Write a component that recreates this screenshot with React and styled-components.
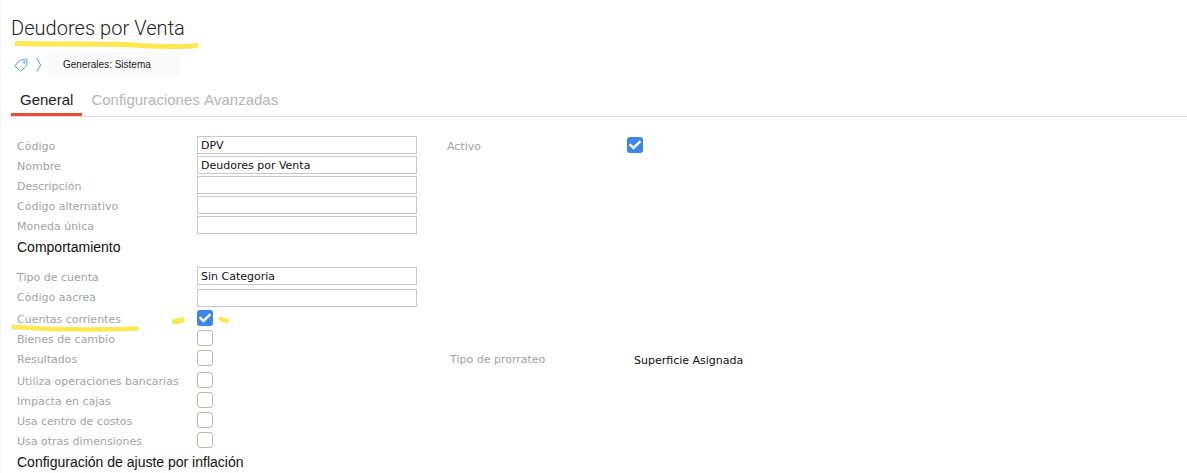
import React from "react";
import styled, { createGlobalStyle } from "styled-components";
import { FaCheck } from "react-icons/fa";

const Global = createGlobalStyle`
  html, body { margin: 0; padding: 0; background: #fff; }
  body { font-family: "DejaVu Sans", sans-serif; }
`;

const Page = styled.div`
  position: relative;
  width: 1187px;
  height: 473px;
  overflow: hidden;
  box-sizing: border-box;
  padding-top: 14px;
  background: #fff;
  box-shadow: inset 1px 0 0 #f4f4f4;
`;
const Title = styled.h1`
  margin: 0 0 0 11px;
  font: 300 20px/28px Roboto, sans-serif;
  letter-spacing: 0.05px;
  color: #222;
`;
const Crumbs = styled.div`
  display: flex;
  align-items: center;
  height: 25px;
  margin: 10px 0 0 14px;
`;
const Crumb = styled.div`
  width: 132px;
  height: 25px;
  margin-left: 6px;
  box-sizing: border-box;
  padding-left: 15px;
  border-radius: 4px;
  background: #fafafa;
  font: 400 10px/25px "Liberation Sans", Arial, sans-serif;
  color: #222;
`;
const Tabs = styled.div`
  display: flex;
  margin: 9px 0 0 11px;
  height: 30px;
  border-bottom: 1px solid #ddd;
`;
const Tab = styled.div`
  box-sizing: border-box;
  height: 30px;
  padding: 4px 9px 0;
  font: 400 15px/20px "Liberation Sans", Arial, sans-serif;
  font-kerning: none;
  color: ${p => (p.$active ? "#222" : "#b5b5b5")};
  border-bottom: 3px solid ${p => (p.$active ? "#e74c3c" : "transparent")};
`;
const Form = styled.div`
  padding: 18px 0 0 17px;
`;
const Row = styled.div`
  display: flex;
  align-items: center;
  height: ${p => p.$h || 20}px;
`;
const Label = styled.label`
  flex: none;
  width: ${p => p.$w || 180}px;
  padding-top: ${p => (p.$shift || 0) * 2}px;
  font-size: 11px;
  color: #a3a3a3;
  line-height: 20px;
`;
const Input = styled.div`
  flex: none;
  width: 220px;
  height: 18px;
  box-sizing: border-box;
  border: 1px solid #c8c8c8;
  padding: 1px 0 0 3px;
  font-size: 11px;
  line-height: 15px;
  color: #111;
`;
const Check = styled.span`
  flex: none;
  display: flex;
  align-items: center;
  justify-content: center;
  width: 16px;
  height: 16px;
  box-sizing: border-box;
  border-radius: 3px;
  border: ${p => (p.$on ? "none" : "1px solid #bdb7b2")};
  background: ${p => (p.$on ? "#3b86e8" : "#fff")};
  color: #fff;
  font-size: 12px;
`;
const Heading = styled.h3`
  margin: 0;
  font: 400 14px/20px "Liberation Sans", Arial, sans-serif;
  color: #111;
`;
const Right = styled.div`
  display: flex;
  align-items: center;
  margin-left: ${p => p.$ml}px;
`;
const Value = styled.span`
  padding-top: 4px;
  font-size: 11px;
  color: #111;
`;
const Marks = styled.svg`
  position: absolute;
  inset: 0;
  pointer-events: none;
`;

const Box = ({ on }) => <Check $on={on}>{on && <FaCheck />}</Check>;

const TagIcon = () => (
  <svg width="14" height="14" viewBox="0 0 14 14" fill="none" stroke="#4aa3f0" strokeWidth="1">
    <path d="M0.7 8 L6.2 2 L12.9 1.6 L12.9 7.4 L6.8 13.4 Z" strokeLinejoin="round" />
    <circle cx="10.2" cy="4.4" r="0.9" />
  </svg>
);
const ChevronWrap = styled.svg`
  margin-left: 8px;
`;
const Chevron = () => (
  <ChevronWrap width="6" height="14" viewBox="0 0 6 14" fill="none" stroke="#3fa0f5" strokeWidth="1">
    <path d="M1 0.5 L4.6 7 L1 13.5" />
  </ChevronWrap>
);

const TextRow = ({ label, value, h, shift, children }) => (
  <Row $h={h}>
    <Label $shift={shift}>{label}</Label>
    <Input>{value}</Input>
    {children}
  </Row>
);
const CheckRow = ({ label, on, children }) => (
  <Row>
    <Label $shift={2}>{label}</Label>
    <Box on={on} />
    {children}
  </Row>
);

export default function App() {
  return (
    <Page>
      <Global />
      <Title>Deudores por Venta</Title>
      <Crumbs>
        <TagIcon />
        <Chevron />
        <Crumb>Generales: Sistema</Crumb>
      </Crumbs>
      <Tabs>
        <Tab $active>General</Tab>
        <Tab>Configuraciones Avanzadas</Tab>
      </Tabs>
      <Form>
        <TextRow label="Código" value="DPV" shift={2}>
          <Right $ml={30}>
            <Label $w={180} $shift={2}>Activo</Label>
            <Box on />
          </Right>
        </TextRow>
        <TextRow label="Nombre" value="Deudores por Venta" shift={2} />
        <TextRow label="Descripción" shift={2} />
        <TextRow label="Código alternativo" shift={2} />
        <TextRow label="Moneda única" shift={2} />
        <Row $h={23}><Heading>Comportamiento</Heading></Row>
        <Row $h={8} />
        <TextRow label="Tipo de cuenta" value="Sin Categoria" shift={2} />
        <Row $h={1} />
        <TextRow label="Código aacrea" h={21} />
        <CheckRow label="Cuentas corrientes" on />
        <CheckRow label="Bienes de cambio" />
        <CheckRow label="Resultados">
          <Right $ml={237}>
            <Label $w={184} $shift={2}>Tipo de prorrateo</Label>
            <Value>Superficie Asignada</Value>
          </Right>
        </CheckRow>
        <Row $h={2} />
        <CheckRow label="Utiliza operaciones bancarias" />
        <CheckRow label="Impacta en cajas" />
        <CheckRow label="Usa centro de costos" />
        <CheckRow label="Usa otras dimensiones" />
        <Row $h={24}><Heading>Configuración de ajuste por inflación</Heading></Row>
      </Form>
      <Marks width="1187" height="473" viewBox="0 0 1187 473" fill="none" stroke="#fde94f" strokeLinecap="round">
        <path d="M17 43.5 C60 44.5 100 43.5 125 44.5 C150 46 175 48 196 45.5" strokeWidth="5" />
        <path d="M13.5 327 C50 329.5 100 330 136.5 328.5" strokeWidth="4.5" />
        <path d="M174.5 321.5 C178 321.5 180 321 182 320" strokeWidth="5.5" />
        <path d="M221 319 C223 319.5 225 320.5 227 321" strokeWidth="4.5" />
      </Marks>
    </Page>
  );
}
